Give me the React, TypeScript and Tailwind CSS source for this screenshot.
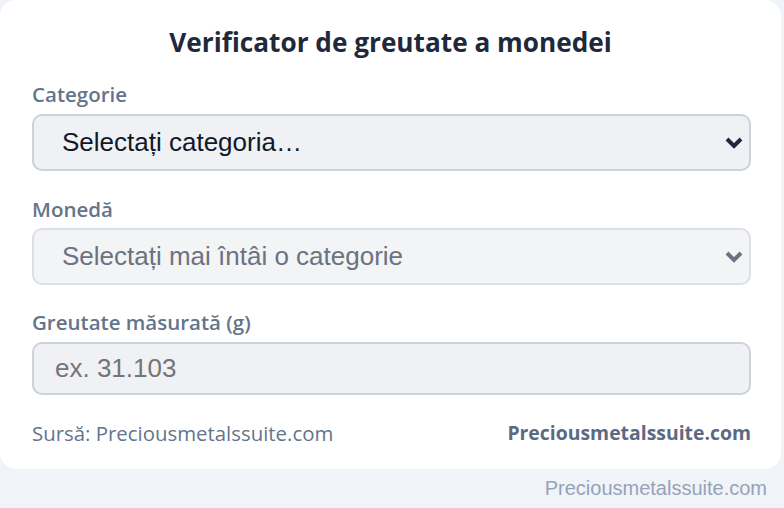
import React from "react";

const ui = { fontFamily: '"Open Sans", "Noto Sans", sans-serif' };
const arial = { fontFamily: '"Liberation Sans", Arial, sans-serif' };

function Chevron({ color }: { color: string }) {
  return (
    <svg width="20" height="13" viewBox="0 0 20 13" fill="none">
      <path d="M3 2.5 L10 9.5 L17 2.5" stroke={color} strokeWidth="4" strokeLinecap="butt" strokeLinejoin="miter" />
    </svg>
  );
}

function Label({ children, className = "" }: { children: React.ReactNode; className?: string }) {
  return (
    <div
      className={`h-[26px] flex items-center text-[20.5px] font-semibold text-[#64748b] ${className}`}
      style={ui}
    >
      {children}
    </div>
  );
}

function SelectBox({
  text,
  disabled,
  className = "",
}: {
  text: string;
  disabled?: boolean;
  className?: string;
}) {
  return (
    <div className={`relative ${className}`}>
      <select
        disabled={disabled}
        className={`w-full h-[57px] appearance-none rounded-[10px] border-2 pl-[28px] pr-12 text-[26px] outline-none ${
          disabled
            ? "bg-[#f3f4f5] border-[#dcdfe3] text-[#6b7280]"
            : "bg-[#eff1f4] border-[#cdd2d9] text-[#111827]"
        }`}
        style={arial}
        defaultValue=""
      >
        <option value="">{text}</option>
      </select>
      <div className="pointer-events-none absolute right-[7px] top-1/2 -translate-y-1/2">
        <Chevron color={disabled ? "#6b7280" : "#1e293b"} />
      </div>
    </div>
  );
}

export default function App() {
  return (
    <div className="min-h-[508px] w-[784px] bg-[#f0f3f8]">
      <div className="w-[781px] bg-white rounded-[16px] px-[32px] pt-[26px] pb-[23px]">
        <h1
          className="h-[34px] flex items-center justify-center text-[26.2px] font-bold text-[#1e293b]"
          style={ui}
        >
          Verificator de greutate a monedei
        </h1>

        <Label className="mt-[21px]">Categorie</Label>
        <SelectBox text="Selectați categoria…" className="mt-[7px] mr-[-2px]" />

        <Label className="mt-[25px]">Monedă</Label>
        <SelectBox text="Selectați mai întâi o categorie" disabled className="mt-[6px] mr-[-2px]" />

        <Label className="mt-[24px]">Greutate măsurată (g)</Label>
        <input
          type="text"
          placeholder="ex. 31.103"
          className="mt-[7px] w-[calc(100%+2px)] h-[53px] rounded-[10px] border-2 border-[#cdd2d9] bg-[#eff1f4] pl-[21px] text-[26px] outline-none placeholder:text-[#757575]"
          style={arial}
        />

        <div className="mt-[25px] h-[26px] flex items-center justify-between mr-[-2px]" style={ui}>
          <span className="text-[20.4px] text-[#64748b]">Sursă: Preciousmetalssuite.com</span>
          <span className="text-[19.4px] font-bold text-[#5b6a82]">Preciousmetalssuite.com</span>
        </div>
      </div>
      <div className="mt-[9px] pr-[17px] flex justify-end">
        <span className="text-[20px] leading-[21px] text-[#94a3b8]" style={arial}>
          Preciousmetalssuite.com
        </span>
      </div>
    </div>
  );
}
